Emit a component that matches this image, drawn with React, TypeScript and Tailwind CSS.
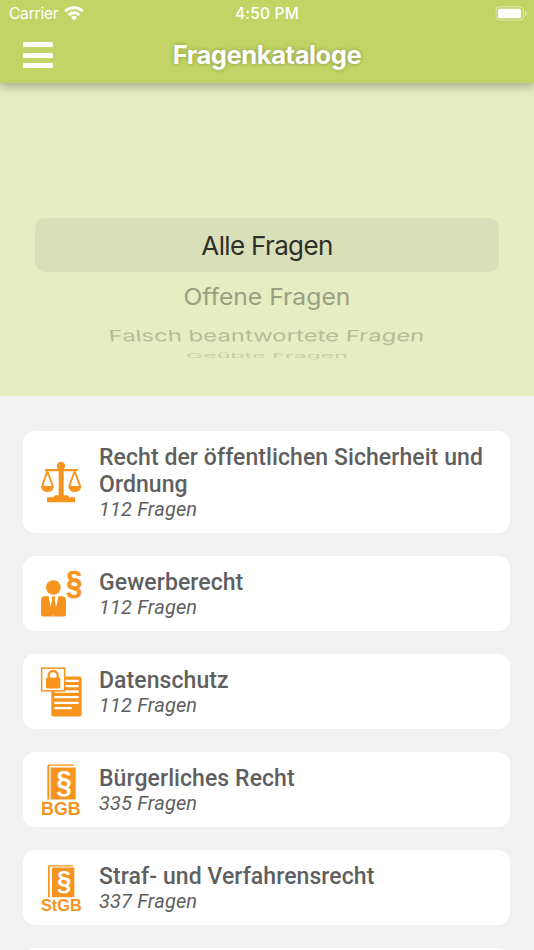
import type { ReactNode } from 'react';

type Catalog = {
  title: string;
  count: number;
  icon: ReactNode;
};

const iconClass = '-my-2 h-14 w-[46px] shrink-0 fill-[#f7941e]';

function ScalesIcon() {
  return (
    <svg viewBox="24 12 138 168" className={iconClass}>
      <circle cx="93" cy="48" r="12.5" />
      <rect x="45" y="57" width="98" height="7" rx="2" />
      <rect x="86" y="52" width="15" height="90" />
      <path d="M71 142q0-6 6-6h34q6 0 6 6h18v15H51v-15z" />
      <path d="M52 64 36 110M52 64l17 46M134 64l-17 46M134 64l17 46" fill="none" stroke="#f7941e" strokeWidth="5.5" />
      <path d="M33 108h39q-2 18-19.500 18T33 108zM115 108h39q-2 18-19.500 18T115 108z" />
    </svg>
  );
}

function TradeIcon() {
  return (
    <svg viewBox="24 16.500 138 168" className={iconClass}>
      <circle cx="70" cy="81" r="22" />
      <path d="M45 107h50q13 0 13 13v42q0 6-6 6H39q-6 0-6-6v-42q0-13 12-13z" />
      <path d="M57 107 70 168 84 107z" fill="#fff" stroke="#fff" strokeWidth="3" />
      <path d="M65 108h11l-2 9 6 34-10 16-10-16 6-34z" />
      <text x="109" y="101.500" textLength="48" lengthAdjust="spacingAndGlyphs" stroke="#f7941e" strokeWidth="2" className="font-['Liberation_Sans'] text-[97px] font-bold">§</text>
    </svg>
  );
}

function PrivacyIcon() {
  return (
    <svg viewBox="24 25.500 138 168" className={iconClass}>
      <rect x="64" y="63" width="91" height="120" rx="7" />
      <path d="M73 76h73M73 92h73M73 108h73M73 125h73M73 142h73M73 158h52" stroke="#fff" strokeWidth="7" />
      <rect x="35" y="38" width="69" height="68" fill="#fff" stroke="#f7941e" strokeWidth="4.500" />
      <path d="M56 70V60a13.500 13.500 0 0 1 27 0v10" fill="none" stroke="#f7941e" strokeWidth="7" />
      <rect x="48" y="66" width="43" height="33" rx="5" />
    </svg>
  );
}

function CivilCodeIcon() {
  return (
    <svg viewBox="24 19.500 138 168" className={iconClass}>
      <path d="M52 30q1-3 7-3h73v4H62q-4 0-4 4v95l3 2h-9z" />
      <path d="M62 36h75v96H62z" />
      <text x="78.500" y="112" textLength="47" lengthAdjust="spacingAndGlyphs" fill="#fff" className="font-['Liberation_Sans'] text-[94px] font-bold">§</text>
      <text x="33" y="178" textLength="119" lengthAdjust="spacingAndGlyphs" className="font-['Liberation_Sans'] text-[53px] font-bold">BGB</text>
    </svg>
  );
}

function PenalCodeIcon() {
  return (
    <svg viewBox="24 13.500 138 168" className={iconClass}>
      <path d="M54 33q1-4 6-4h70v4H63q-4 0-4 4v86l3 2h-8z" />
      <path d="M66 36h67v89H66z" />
      <text x="81" y="104" textLength="43" lengthAdjust="spacingAndGlyphs" fill="#fff" className="font-['Liberation_Sans'] text-[81px] font-bold">§</text>
      <text x="33" y="167" textLength="122" lengthAdjust="spacingAndGlyphs" className="font-['Liberation_Sans'] text-[49px] font-bold">StGB</text>
    </svg>
  );
}

const catalogs: Catalog[] = [
  { title: 'Recht der öffentlichen Sicherheit und Ordnung', count: 112, icon: <ScalesIcon /> },
  { title: 'Gewerberecht', count: 112, icon: <TradeIcon /> },
  { title: 'Datenschutz', count: 112, icon: <PrivacyIcon /> },
  { title: 'Bürgerliches Recht', count: 335, icon: <CivilCodeIcon /> },
  { title: 'Straf- und Verfahrensrecht', count: 337, icon: <PenalCodeIcon /> },
];

function StatusBar() {
  return (
    <div className="grid h-[27px] grid-cols-3 items-center pr-[7px] pl-[9px] text-[15.500px]">
      <div className="flex items-center gap-[5.500px]">
        <span className="tracking-[-0.2px]">Carrier</span>
        <svg viewBox="0 0 20 15" className="h-[15px] w-5" fill="none" stroke="#fff" strokeWidth="3">
          <path d="M1.200 5.300a12.500 12.500 0 0 1 17.600 0" />
          <path d="M4.600 9a7.700 7.700 0 0 1 10.800 0" />
          <path d="M10 14.500 6.900 11.400a4.400 4.400 0 0 1 6.200 0z" fill="#fff" stroke="none" />
        </svg>
      </div>
      <span className="-ml-[2px] text-center font-medium tracking-[0.2px]">4:50 PM</span>
      <svg viewBox="0 0 32 15" className="h-[15px] w-8 justify-self-end" fill="#fff">
        <rect x="1" y="0.700" width="27.500" height="13.500" rx="4" fill="none" stroke="#fff" strokeOpacity="0.450" />
        <rect x="3" y="2.700" width="23" height="9.500" rx="2" />
        <path d="M30 5q1.800.5 1.800 2.500T30 10z" fillOpacity="0.500" />
      </svg>
    </div>
  );
}

function Header() {
  return (
    <header className="relative z-10 h-[83px] bg-[#c1d465] text-white shadow-[0_3px_10px_rgba(0,0,0,0.3)]">
      <StatusBar />
      <div className="grid h-14 grid-cols-[60px_1fr_60px] items-center">
        <div className="ml-[23px] flex w-[29.500px] flex-col gap-[5.500px]">
          <span className="h-[5px] rounded-[1px] bg-white" />
          <span className="h-[5px] rounded-[1px] bg-white" />
          <span className="h-[5px] rounded-[1px] bg-white" />
        </div>
        <h1 className="text-center text-[25.500px] font-bold tracking-[-0.4px] [text-shadow:0_0_4px_rgba(0,0,0,0.3)]">
          Fragenkataloge
        </h1>
      </div>
    </header>
  );
}

function FilterPicker() {
  return (
    <section className="flex h-[313px] flex-col items-center bg-[#e6edc1] px-[35px] pt-[135px] text-[26px] leading-none whitespace-nowrap">
      <div className="flex h-[54px] w-full items-center justify-center rounded-[10px] bg-[#d9dfb9] pt-px text-[#2f302b]">
        <span className="tracking-[-0.65px]">Alle Fragen</span>
      </div>
      <div className="flex h-12 items-center pt-px text-[#9a9f81]">
        <span className="[transform:scale(0.950,0.900)]">Offene Fragen</span>
      </div>
      <div className="flex h-8 items-center text-[#b3b996]">
        <span className="[transform:perspective(1600px)_rotateX(-52deg)_scaleX(0.920)]">Falsch beantwortete Fragen</span>
      </div>
      <div className="flex h-2 items-center text-[#c8cea8]">
        <span className="[transform:scale(0.890,0.220)]">Geübte Fragen</span>
      </div>
    </section>
  );
}

function CatalogCard({ title, count, icon }: Catalog) {
  return (
    <li className="flex items-center gap-[15px] rounded-xl bg-white py-3 pr-5 pl-[15px] font-['Roboto'] text-[#5f5f5f]">
      {icon}
      <div>
        <h2 className="relative top-px text-[23px] leading-[27px] font-medium tracking-[0.075px]">{title}</h2>
        <p className="text-[20px] leading-6 tracking-[0.15px] italic">{count} Fragen</p>
      </div>
    </li>
  );
}

export default function App() {
  return (
    <div className="h-[950px] w-[534px] overflow-hidden bg-[#f1f1f1] font-['Inter',sans-serif]">
      <Header />
      <FilterPicker />
      <ul className="flex flex-col gap-[23px] pt-[35px] pr-[24px] pl-[23px]">
        {catalogs.map((catalog) => (
          <CatalogCard key={catalog.title} {...catalog} />
        ))}
        <li className="h-[75px] rounded-xl bg-white" />
      </ul>
    </div>
  );
}
